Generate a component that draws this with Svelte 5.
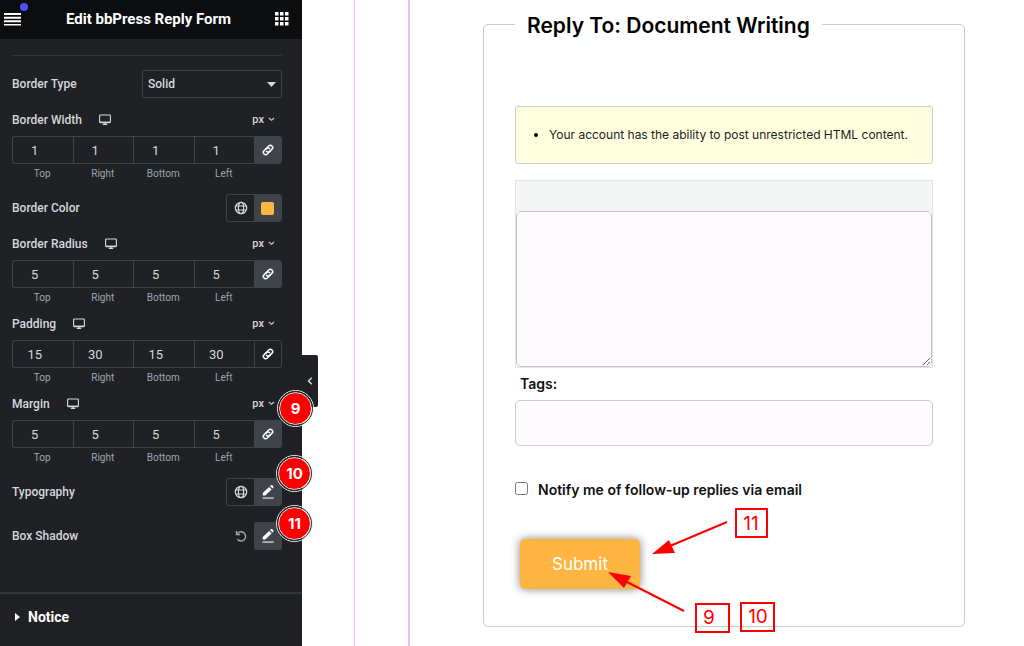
<script lang="ts">
	type Dimension = { name: string; values: number[]; linked: boolean };

	const sides = ['Top', 'Right', 'Bottom', 'Left'];

	let borderType = $state('Solid');
	let borderWidth: Dimension = $state({ name: 'Border Width', values: [1, 1, 1, 1], linked: true });
	let spacing: Dimension[] = $state([
		{ name: 'Border Radius', values: [5, 5, 5, 5], linked: true },
		{ name: 'Padding', values: [15, 30, 15, 30], linked: false },
		{ name: 'Margin', values: [5, 5, 5, 5], linked: true }
	]);

	const badges = [
		{ step: 9, x: 277, y: 390 },
		{ step: 10, x: 276, y: 455 },
		{ step: 11, x: 276, y: 505 }
	];
</script>

{#snippet globe()}
	<svg width="14" height="14" viewBox="0 0 14 14" fill="none" stroke="currentColor" stroke-width="1.2">
		<circle cx="7" cy="7" r="5.7" />
		<ellipse cx="7" cy="7" rx="2.6" ry="5.7" />
		<path d="M1.8 5h10.4M1.8 9h10.4" />
	</svg>
{/snippet}

{#snippet pencil()}
	<svg width="14" height="16" viewBox="0 0 14 16" fill="currentColor">
		<path d="M1.8 11.6V9.1l6.3-6.2 2.5 2.5-6.3 6.2z" />
		<path d="M9 2.1l.9-.9q.7-.6 1.4 0l1 1q.6.7 0 1.4l-.9.9z" />
		<path d="M1.5 13.4h11.2v1.3H1.5z" opacity=".8" />
	</svg>
{/snippet}

{#snippet dimension(item: Dimension)}
	<div class="dimension" role="group" aria-label={item.name}>
		<div class="dimension-head">
			<span class="name">{item.name}</span>
			<button class="device" aria-label="Desktop">
				<svg width="12" height="12" viewBox="0 0 12 12" fill="none" stroke="currentColor">
					<rect x=".6" y="1" width="10.8" height="7.6" rx=".8" stroke-width="1.1" />
					<path d="M1 8.2h10" stroke-width="1.3" />
					<path d="M3.8 10.4h4.4M6 8.5v2" stroke-width="1.3" />
				</svg>
			</button>
			<button class="unit">
				px
				<svg width="7" height="5" viewBox="0 0 7 5" fill="none" stroke="currentColor" stroke-width="1.1">
					<path d="M1 1l2.5 2.3L6 1" />
				</svg>
			</button>
		</div>
		<div class="sides">
			{#each sides as side, i}
				<label>
					<input type="text" inputmode="numeric" bind:value={item.values[i]} />
					<span>{side}</span>
				</label>
			{/each}
			<button
				class="link"
				class:linked={item.linked}
				aria-label="Link values together"
				onclick={() => (item.linked = !item.linked)}
			>
				<svg width="14" height="14" viewBox="0 0 14 14" fill="none" stroke="currentColor" stroke-width="1.5">
					<g transform="rotate(-45 7 7)">
						<path d="M8.3 8.7a2.5 2.5 0 0 1-1.3.6H3.7a2.3 2.3 0 0 1 0-4.6H7a2.3 2.3 0 0 1 1.9 3" />
						<path d="M5.7 5.3a2.5 2.5 0 0 1 1.3-.6h3.3a2.3 2.3 0 0 1 0 4.6H7a2.3 2.3 0 0 1-1.9-3" />
					</g>
				</svg>
			</button>
		</div>
	</div>
{/snippet}

<div class="editor">
	<aside class="panel">
		<header>
			<button class="menu" aria-label="Menu">
				<svg width="18" height="14" viewBox="0 0 18 14" fill="currentColor">
					<path d="M0 1h17v2H0zM0 4.7h17v2H0zM0 8.3h17v2H0zM0 12h17v1.5H0z" />
				</svg>
				<span class="dot"></span>
			</button>
			<h1>Edit bbPress Reply Form</h1>
			<button class="widgets" aria-label="Widgets">
				<svg width="14" height="14" viewBox="0 0 14 14" fill="currentColor">
					{#each [0, 5, 10] as y}
						{#each [0, 5, 10] as x}
							<rect {x} {y} width="3.5" height="3.5" />
						{/each}
					{/each}
				</svg>
			</button>
		</header>

		<div class="controls">
			<div class="row">
				<label class="name" for="border-type">Border Type</label>
				<div class="select">
					<select id="border-type" bind:value={borderType}>
						<option>Solid</option>
						<option>Dashed</option>
						<option>Dotted</option>
					</select>
					<svg width="9" height="5" viewBox="0 0 9 5" fill="currentColor"><path d="M0 0h9L4.5 5z" /></svg>
				</div>
			</div>

			{@render dimension(borderWidth)}

			<div class="row">
				<span class="name">Border Color</span>
				<div class="pair">
					<button aria-label="Global colors">{@render globe()}</button>
					<button class="filled" aria-label="Pick color"><span class="swatch"></span></button>
				</div>
			</div>

			{#each spacing as item}
				{@render dimension(item)}
			{/each}

			<div class="row">
				<span class="name">Typography</span>
				<div class="pair">
					<button aria-label="Global fonts">{@render globe()}</button>
					<button class="filled" aria-label="Edit typography">{@render pencil()}</button>
				</div>
			</div>

			<div class="row">
				<span class="name">Box Shadow</span>
				<div class="pair bare">
					<button class="reset" aria-label="Back to default">
						<svg width="12" height="12" viewBox="0 0 12 12" fill="none" stroke="currentColor" stroke-width="1.4">
							<path d="M1.5 1v3.5H5" />
							<path d="M1.9 4.3a4.6 4.6 0 1 1 .5 4.9" />
						</svg>
					</button>
					<button class="filled" aria-label="Edit box shadow">{@render pencil()}</button>
				</div>
			</div>
		</div>

		<button class="section">
			<svg width="5" height="8" viewBox="0 0 5 8" fill="currentColor"><path d="M0 0l5 4-5 4z" /></svg>
			Notice
		</button>

		<button class="collapse" aria-label="Hide panel">
			<svg width="6" height="8" viewBox="0 0 6 8" fill="none" stroke="currentColor" stroke-width="1.4">
				<path d="M4.8.8L1.5 4l3.3 3.2" />
			</svg>
		</button>

		{#each badges as badge}
			<span class="badge" style:left="{badge.x}px" style:top="{badge.y}px">{badge.step}</span>
		{/each}
	</aside>

	<main>
		<div class="guide">
			<form onsubmit={(e) => e.preventDefault()}>
				<fieldset>
					<legend>Reply To: Document Writing</legend>

					<ul class="notice">
						<li>Your account has the ability to post unrestricted HTML content.</li>
					</ul>

					<div class="content">
						<div class="toolbar"></div>
						<textarea aria-label="Reply"></textarea>
					</div>

					<label class="tags" for="tags">Tags:</label>
					<input id="tags" class="text" type="text" />

					<label class="notify">
						<input type="checkbox" />
						Notify me of follow-up replies via email
					</label>

					<div class="actions">
						<button class="submit">Submit</button>
						<svg class="arrows" width="270" height="140" viewBox="0 0 270 140">
							<g fill="none" stroke="#f00" stroke-width="2">
								<path d="M207 22L150 46M164 111L107 82" />
								<rect x="216" y="9" width="31" height="28" />
								<rect x="176" y="104" width="33" height="28" />
								<rect x="221" y="103" width="33" height="28" />
							</g>
							<path d="M132 54L149 40l6 13zM88 72l23 4-7 12z" fill="#f00" />
							<g fill="#f00" font-size="19" text-anchor="middle">
								<text x="231" y="30">11</text>
								<text x="189" y="124">9</text>
								<text x="238" y="123">10</text>
							</g>
						</svg>
					</div>
				</fieldset>
			</form>
		</div>
	</main>
</div>

<style>
	:global(body) {
		margin: 0;
		background: #fff;
	}

	.editor {
		display: flex;
		min-height: 100vh;
		font-family: Inter, 'Liberation Sans', sans-serif;
	}

	button {
		display: flex;
		align-items: center;
		justify-content: center;
		padding: 0;
		border: 0;
		background: none;
		color: inherit;
		font: inherit;
		cursor: pointer;
	}

	input,
	select,
	textarea {
		box-sizing: border-box;
		margin: 0;
		font: inherit;
	}

	/* settings panel */
	.panel {
		position: relative;
		flex: 0 0 302px;
		background: #1f2124;
		color: #d5d8dc;
		font-family: Roboto, 'Liberation Sans', sans-serif;
		font-size: 12px;
		font-weight: 500;
	}

	header {
		display: flex;
		align-items: center;
		justify-content: space-between;
		height: 37px;
		padding: 0 13px 2px 4px;
		background: #0c0d0e;
		color: #fff;
	}

	h1 {
		margin: 0;
		font-size: 15px;
		font-weight: 700;
	}

	.menu {
		position: relative;
	}

	.dot {
		position: absolute;
		top: -9px;
		right: -6px;
		width: 8px;
		height: 8px;
		border-radius: 50%;
		background: #524cff;
	}

	.controls {
		margin: 16px 20px 0 12px;
		padding-top: 14px;
		border-top: 1px solid #323539;
	}

	.row {
		display: flex;
		align-items: center;
		justify-content: space-between;
		height: 28px;
		margin-bottom: 13px;
	}

	.row + .row {
		margin-top: 16px;
	}

	.select {
		display: grid;
		align-items: center;
		width: 140px;
	}

	.select > * {
		grid-area: 1 / 1;
	}

	.select svg {
		justify-self: end;
		margin-right: 6px;
		pointer-events: none;
	}

	select {
		height: 28px;
		padding: 0 5px;
		border: 1px solid #3f444b;
		border-radius: 3px;
		appearance: none;
		background: #1f2124;
		color: inherit;
	}

	.dimension {
		margin-bottom: 13px;
	}

	.dimension + .dimension {
		margin-top: -3px;
	}

	.dimension-head {
		display: flex;
		align-items: center;
		height: 17px;
		margin-bottom: 8px;
	}

	.device {
		margin-left: 17px;
	}

	.unit {
		gap: 4px;
		margin-left: auto;
		padding-right: 7px;
		font-size: 11px;
	}

	.sides {
		display: grid;
		grid-template-columns: repeat(4, 1fr) 28px;
	}

	.sides label {
		display: flex;
		flex-direction: column;
		gap: 3px;
		color: #9da5ae;
		font-size: 10px;
		font-weight: 400;
		line-height: 14px;
		text-align: center;
	}

	.sides input {
		width: 100%;
		height: 28px;
		padding: 0 16px 0 0;
		border: 1px solid #3f444b;
		border-right: 0;
		background: transparent;
		color: #d5d8dc;
		font-size: 13px;
		text-align: center;
	}

	.sides label:first-child input {
		border-radius: 3px 0 0 3px;
	}

	.link {
		height: 28px;
		border: 1px solid #3f444b;
		border-radius: 0 3px 3px 0;
		color: #fff;
	}

	.linked,
	.pair .filled {
		background: #3f444b;
	}

	.pair {
		display: flex;
		box-sizing: border-box;
		height: 28px;
		border: 1px solid #3f444b;
		border-radius: 3px;
	}

	.pair button {
		width: 27px;
	}

	.pair .filled {
		border-radius: 0 2px 2px 0;
		color: #fff;
	}

	.bare {
		border: 0;
	}

	.bare .filled {
		width: 28px;
		border-radius: 3px;
	}

	.reset {
		color: #9da5ae;
	}

	.swatch {
		width: 13px;
		height: 13px;
		border-radius: 2px;
		background: #ffb541;
	}

	.section {
		justify-content: flex-start;
		gap: 8px;
		width: 100%;
		height: 48px;
		margin-top: 42px;
		padding-left: 15px;
		border-top: 2px solid #323539;
		color: #fff;
		font-size: 14px;
		font-weight: 700;
	}

	.collapse {
		position: absolute;
		top: 355px;
		left: 100%;
		width: 16px;
		height: 52px;
		border-radius: 0 2px 2px 0;
		background: #1f2124;
	}

	.badge {
		position: absolute;
		box-sizing: border-box;
		width: 37px;
		height: 37px;
		border: 3px double #eee;
		border-radius: 50%;
		background: #f00 padding-box;
		box-shadow: inset 0 0 0 1px #f00;
		color: #fff;
		font-family: Inter, 'Liberation Sans', sans-serif;
		font-size: 15px;
		font-weight: 700;
		line-height: 31px;
		text-align: center;
	}

	.badge::before {
		content: '';
		position: absolute;
		inset: -2px;
		border: 1px solid #222;
		border-radius: 50%;
	}

	/* page preview with its two column guides */
	main {
		flex: 1;
		display: flex;
		margin-left: 52px;
		border-left: 1px solid #f3c4fb;
	}

	.guide {
		flex: 1;
		margin-left: 53px;
		padding: 5px 59px 0 73px;
		border-left: 2px solid #f2b8fb;
	}

	fieldset {
		min-width: 0;
		margin: 0;
		padding: 63px 31px 37px;
		border: 1px solid #ccc;
		border-radius: 5px;
	}

	legend {
		padding: 4px 12px 0;
		color: #000;
		font-size: 21px;
		font-weight: 600;
		line-height: 34px;
	}

	.notice {
		margin: 0 0 16px;
		padding: 18px 0 18px 33px;
		border: 1px solid #ccc;
		border-radius: 3px;
		background: #ffffe0;
		color: #222;
		font-size: 12px;
		line-height: 20px;
	}

	.notice li::marker {
		color: #000;
	}

	.content {
		border: 1px solid #e2e4e4;
	}

	.toolbar {
		height: 30px;
		background: #f4f6f6;
	}

	textarea {
		display: block;
		width: 100%;
		height: 156px;
		border: 1px solid #c4c4c4;
		border-radius: 5px;
		background: #fdfbfd;
		resize: vertical;
	}

	.tags {
		display: block;
		margin: 6px 5px;
		color: #111;
		font-size: 14px;
		font-weight: 600;
		line-height: 20px;
	}

	.text {
		display: block;
		width: 100%;
		height: 46px;
		padding: 0 12px;
		border: 1px solid #ccc;
		border-radius: 5px;
		background: #fdfbfd;
	}

	.notify {
		display: flex;
		gap: 10px;
		margin: 34px 0 39px;
		color: #111;
		font-size: 14px;
		font-weight: 600;
		line-height: 20px;
	}

	.notify input {
		width: 13px;
		height: 13px;
		margin-top: 2px;
	}

	.actions {
		position: relative;
		padding-left: 5px;
	}

	.submit {
		height: 50px;
		padding: 0 32px;
		border-radius: 5px;
		background: #ffb541;
		box-shadow: 0 0 10px rgba(0, 0, 0, 0.5);
		color: #fff;
		font-size: 17px;
	}

	.arrows {
		position: absolute;
		top: -39px;
		left: 5px;
		pointer-events: none;
	}
</style>
